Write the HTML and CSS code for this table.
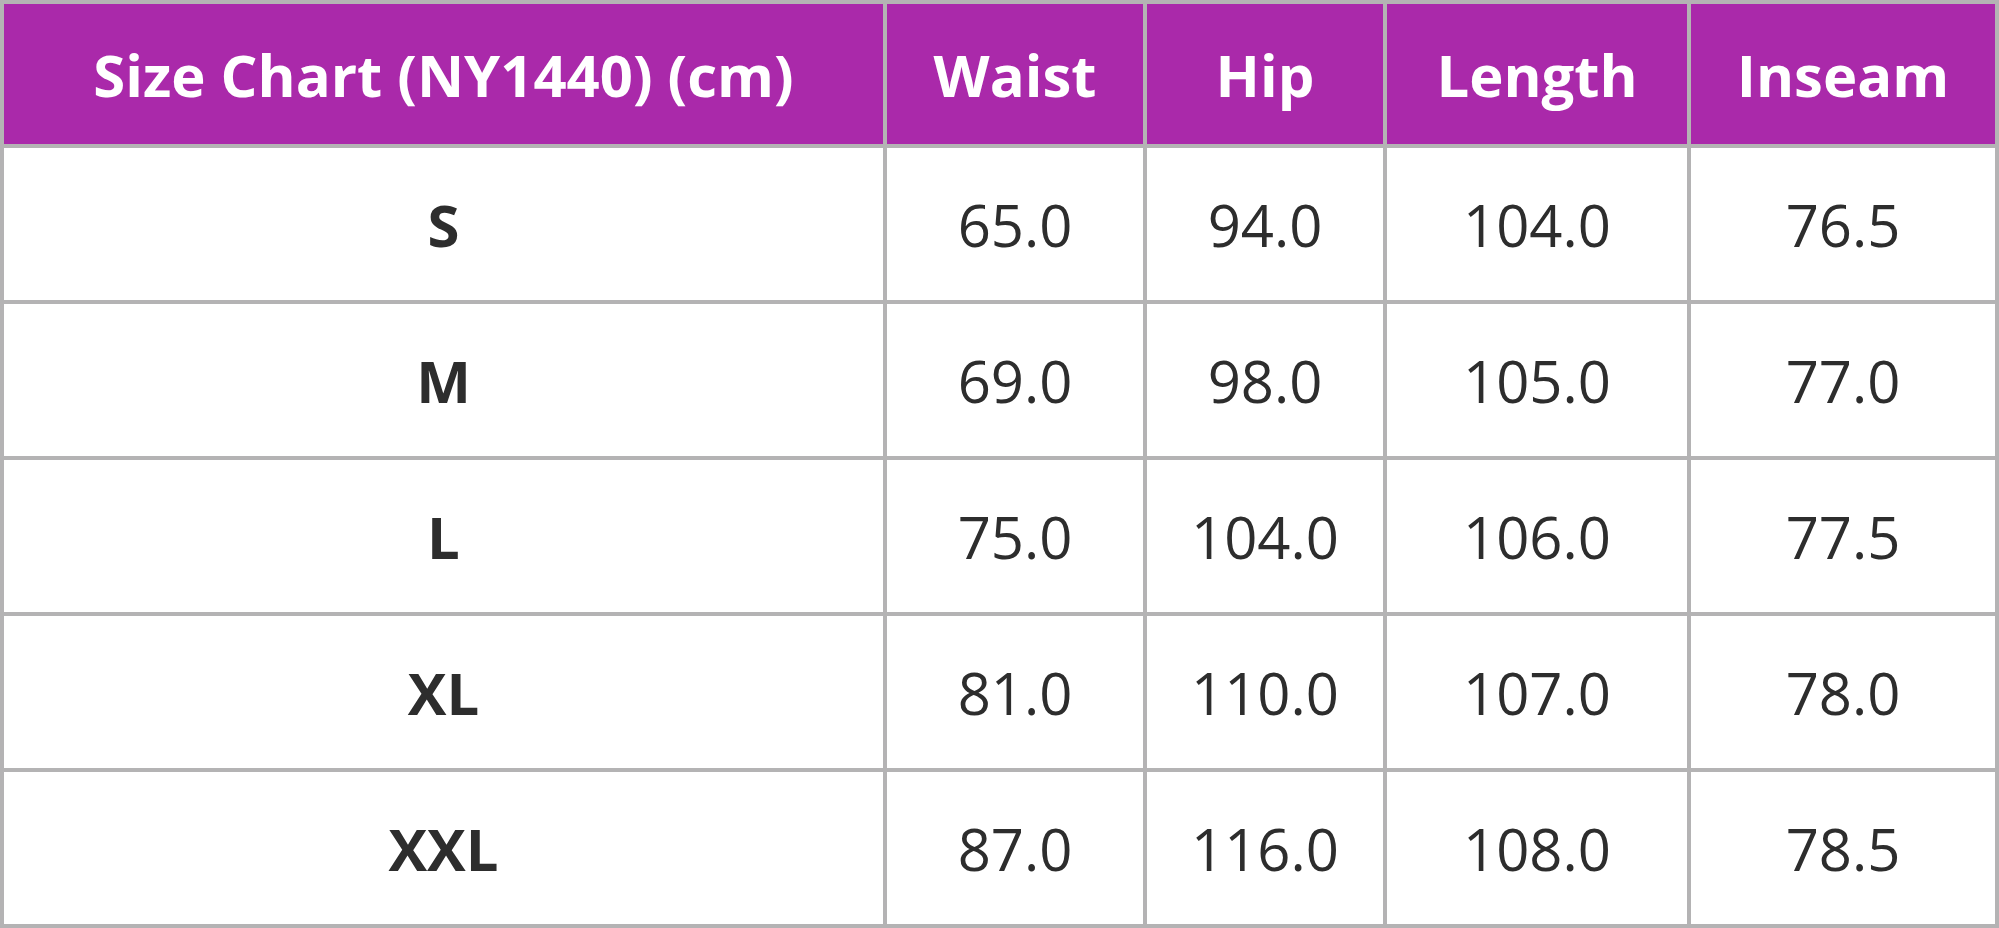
FILE: index.html
```html
<!DOCTYPE html>
<html>
<head>
<meta charset="utf-8">
<link rel="stylesheet" href="styles.css">
</head>
<body>
<table class="chart">
  <colgroup>
    <col class="c-size"><col class="c-waist"><col class="c-hip"><col class="c-length"><col class="c-inseam">
  </colgroup>
  <thead>
    <tr><th>Size Chart (NY1440) (cm)</th><th>Waist</th><th>Hip</th><th>Length</th><th>Inseam</th></tr>
  </thead>
  <tbody>
    <tr><td class="size">S</td><td>65.0</td><td>94.0</td><td>104.0</td><td>76.5</td></tr>
    <tr><td class="size">M</td><td>69.0</td><td>98.0</td><td>105.0</td><td>77.0</td></tr>
    <tr><td class="size">L</td><td>75.0</td><td>104.0</td><td>106.0</td><td>77.5</td></tr>
    <tr><td class="size">XL</td><td>81.0</td><td>110.0</td><td>107.0</td><td>78.0</td></tr>
    <tr><td class="size">XXL</td><td>87.0</td><td>116.0</td><td>108.0</td><td>78.5</td></tr>
  </tbody>
</table>
</body>
</html>
```
FILE: styles.css
```css
html, body {
  margin: 0;
  padding: 0;
  background: #ffffff;
}
.chart {
  border-collapse: separate;
  border-spacing: 4px;
  background: #b4b3b4;
  table-layout: fixed;
  width: 1999px;
  font-family: "Open Sans", "Noto Sans", sans-serif;
  color: #2d2d2d;
}
.c-size { width: 879px; }
.c-waist { width: 256px; }
.c-hip { width: 236px; }
.c-length { width: 300px; }
.c-inseam { width: 304px; }
.chart th, .chart td {
  padding: 0;
  text-align: center;
  vertical-align: middle;
}
.chart th {
  background: #aa29aa;
  color: #ffffff;
  font-weight: 700;
  font-size: 58px;
  height: 140px;
}
.chart td {
  background: #ffffff;
  font-size: 58px;
  font-weight: 400;
  height: 152px;
}
.chart td.size {
  font-weight: 700;
}
```
